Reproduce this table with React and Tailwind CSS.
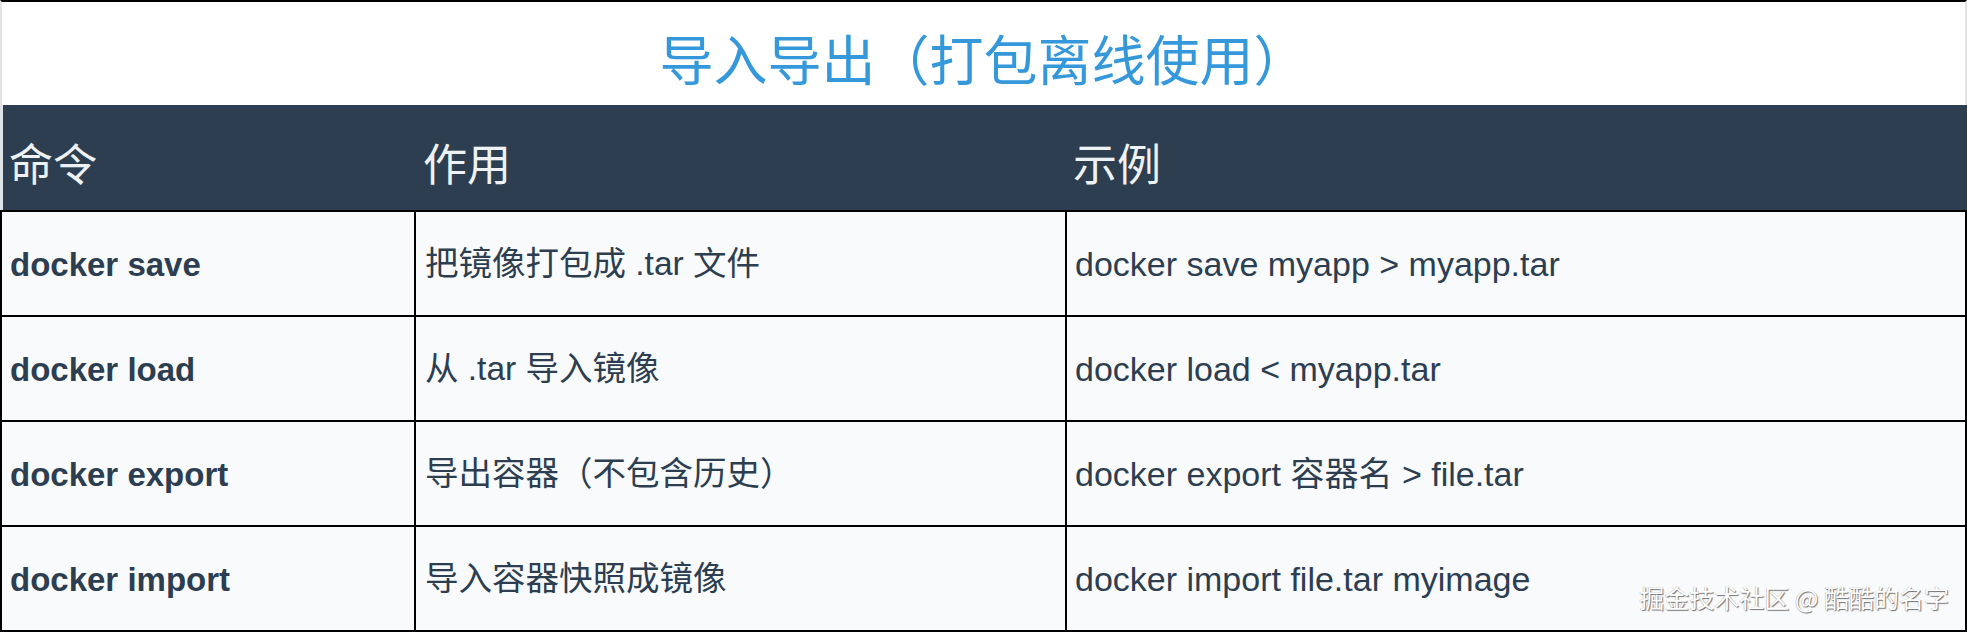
import React from "react";

const rows = [
  ["docker save", "把镜像打包成 .tar 文件", "docker save myapp > myapp.tar"],
  ["docker load", "从 .tar 导入镜像", "docker load < myapp.tar"],
  ["docker export", "导出容器（不包含历史）", "docker export 容器名 > file.tar"],
  ["docker import", "导入容器快照成镜像", "docker import file.tar myimage"],
];

const font = { fontFamily: '"Liberation Sans", "Noto Sans CJK SC", sans-serif' };

export default function App() {
  return (
    <div
      className="relative w-[1967px] h-[632px] overflow-hidden bg-[#f8fafc] text-[#2c3e50]"
      style={font}
    >
      <div className="h-[105px] bg-white border-t-2 border-black border-l-2 border-l-[#e2e2e2] border-r-2 border-r-[#e2e2e2] flex items-center justify-center pt-[8px]">
        <h1 className="text-[54px] leading-none font-normal text-[#3498db] [font-family:'Noto_Sans_CJK_SC',sans-serif]">
          导入导出（打包离线使用）
        </h1>
      </div>
      <div className="h-[105px] bg-[#2c3e50] border-l-[3px] border-l-[#dfe3e8] grid grid-cols-[411px_651px_1fr] text-[44px] leading-none text-[#eef2f5] [font-family:'Noto_Sans_CJK_SC',sans-serif]">
        <div className="flex items-center pl-[6px] pt-[8px]">命令</div>
        <div className="flex items-center pl-[9px] pt-[8px]">作用</div>
        <div className="flex items-center pl-[8px] pt-[8px]">示例</div>
      </div>
      <div className="border-t-2 border-black">
        {rows.map((r, i) => (
          <div
            key={i}
            className="h-[105px] border-x-2 border-b-2 border-black grid grid-cols-[412px_651px_1fr] text-[34px]"
          >
            <div className="flex items-center pl-[8px] pt-[2px] font-bold text-[33px]">{r[0]}</div>
            <div className="flex items-center pl-[9px] pt-[2px] border-l-2 border-black text-[33.5px]">{r[1]}</div>
            <div className="flex items-center pl-[8px] pt-[2px] border-l-2 border-black">{r[2]}</div>
          </div>
        ))}
      </div>
      <div className="absolute right-[18px] top-[585px] text-[25px] leading-none text-white [text-shadow:1px_1px_1px_rgba(0,0,0,0.55),-0.5px_-0.5px_0.5px_rgba(0,0,0,0.3)] [font-family:'Noto_Sans_CJK_SC',sans-serif]">
        掘金技术社区 @ 酷酷的名字
      </div>
    </div>
  );
}
